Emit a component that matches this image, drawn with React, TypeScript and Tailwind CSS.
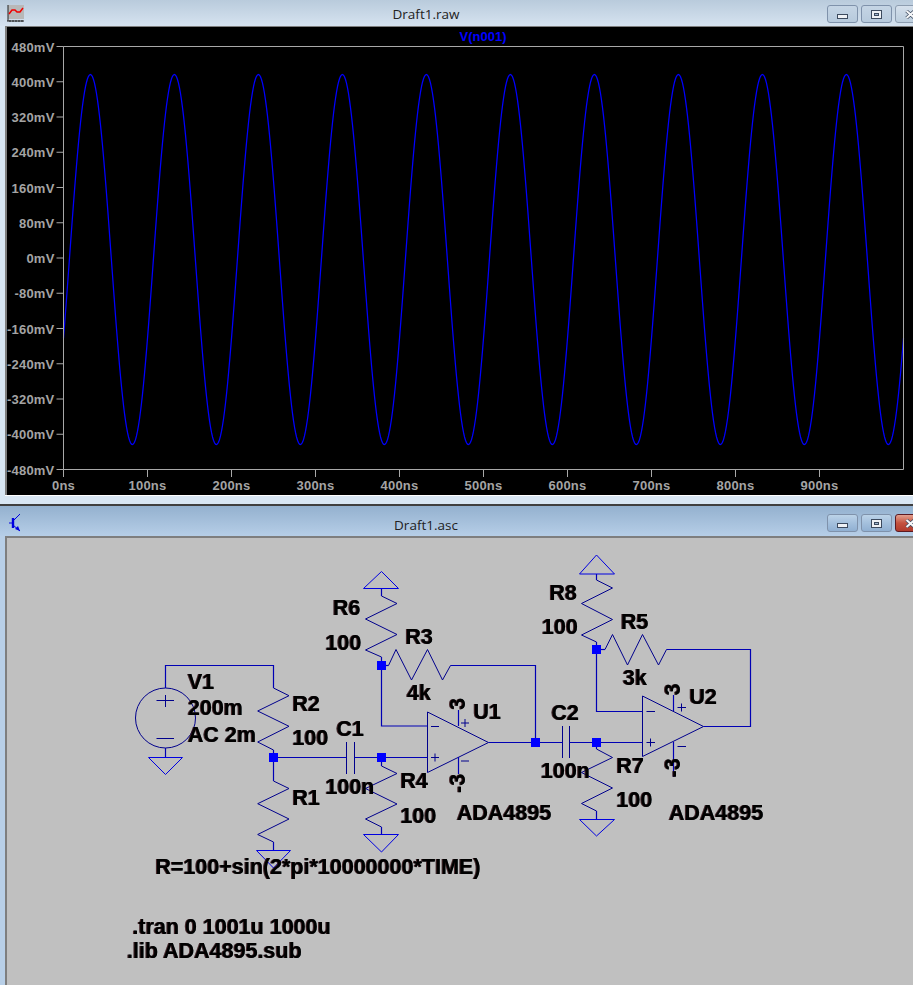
import React from 'react';

const yTicks = ['480mV', '400mV', '320mV', '240mV', '160mV', '80mV', '0mV', '-80mV', '-160mV', '-240mV', '-320mV', '-400mV', '-480mV'];
const xTicks = ['0ns', '100ns', '200ns', '300ns', '400ns', '500ns', '600ns', '700ns', '800ns', '900ns'];

// 10MHz sine across the 1us window of the plot
function wavePath() {
  const pts: string[] = [];
  for (let px = 0; px <= 840; px += 1) {
    const t = px / 0.84;
    const mv = -3.5 + 420 * Math.sin((2 * Math.PI * (t - 7)) / 100);
    pts.push(`${(63.5 + px).toFixed(1)},${(258 - mv * 0.4406).toFixed(1)}`);
  }
  return 'M' + pts.join('L');
}

const labels: [string, number, number][] = [
  ['V1', 188, 688.5],
  ['200m', 188, 715],
  ['AC 2m', 188, 741.5],
  ['R2', 292.5, 710.5],
  ['100', 292.5, 745],
  ['C1', 336.5, 736],
  ['100n', 325.5, 793.5],
  ['R1', 292.5, 804.5],
  ['R6', 333, 614.5],
  ['100', 325.5, 649.5],
  ['R3', 405.5, 644],
  ['4k', 407, 700],
  ['U1', 473.5, 718.5],
  ['R4', 400.5, 787.5],
  ['100', 400.5, 822.5],
  ['ADA4895', 457, 819.5],
  ['C2', 551.5, 720],
  ['100n', 541, 777.5],
  ['R8', 549.5, 599.5],
  ['100', 542, 633.5],
  ['R5', 621, 628.5],
  ['3k', 623, 685],
  ['U2', 689.5, 703.5],
  ['R7', 616.5, 772.5],
  ['100', 616.5, 806.5],
  ['ADA4895', 669, 820],
  ['R=100+sin(2*pi*10000000*TIME)', 155.5, 873.5],
  ['.tran 0 1001u 1000u', 132.5, 934],
  ['.lib ADA4895.sub', 127, 957.5],
];

const wires = [
  'M165.5 688V665.5H273.5V688',
  'M165.5 748V757',
  'M273.5 750V781',
  'M273.5 842V850',
  'M273.5 757.5H346.5',
  'M354.5 757.5H427.5',
  'M381.5 657V726H427.5',
  'M381.5 757.5V766',
  'M381.5 827V834',
  'M381.5 588V596',
  'M381.5 665.5H388.5',
  'M450.5 665.5H535.5V742.5',
  'M488.5 742.5H562.5',
  'M569.5 742.5H642.5',
  'M596.5 642V711.5H642.5',
  'M596.5 574V580',
  'M596.5 649.5H605',
  'M666.5 649.5H750.5V726.5H703.5',
  'M596.5 742.5V749',
  'M596.5 811V819',
  'M458.5 710V726',
  'M458.5 757V774',
  'M673.5 695V711',
  'M673.5 742V777',
];

const parts = [
  // resistors
  'M273.5 688L289 695.7L257.7 711L289 726.3L257.7 742L273.5 750',
  'M273.5 781L289 788.5L257.7 803.7L289 819L257.7 834.5L273.5 842',
  'M381.5 596L397 603.5L365.5 619L397 634.5L365.5 650L381.5 657',
  'M381.5 766L397 773.5L365.5 788.5L397 804L365.5 819L381.5 827',
  'M388.5 665.5L396 649.5L411.5 680L427.5 649.5L442.5 680L450.5 665.5',
  'M596.5 580L612.5 588L581.5 603.5L612.5 619.5L581.5 635L596.5 642',
  'M605 649.5L612.5 634.5L627.5 665L642.5 634.5L658.5 665L666.5 649.5',
  'M596.5 749L612.5 757.5L581.5 772.5L612.5 788L581.5 803.5L596.5 811',
  // capacitors
  'M346.5 742V774M354.5 742V774',
  'M562.5 726V758M569.5 726V758',
  // op amps and their +/- marks
  'M427.5 712L488.5 742.5L427.5 772.5Z',
  'M431 726.5H439M431 757.5H439M435 753.5V761.5M461 723H469M465 719V727M461 761H469',
  'M642.5 696L703.5 726.5L642.5 756.5Z',
  'M646.5 711.5H655M646.5 742.5H655M650.5 738.5V746.5M677.5 707.5H686M681.5 703.5V711.5M677.5 746.5H686',
  // source
  'M156.5 700.5H174M165.5 695V707M156.5 738.5H174',
];

const grounds = [
  'M148.5 757.5H182.5L165.5 774.5Z',
  'M256.5 850.5H290.5L273.5 868Z',
  'M363.5 834.5H398.5L381.5 852Z',
  'M363.5 588.5H398.5L381.5 571.5Z',
  'M579.5 574H614.5L596.5 555Z',
  'M579.5 819.5H614.5L596.5 836Z',
];

const nodes = [
  [273.5, 757.5],
  [381.5, 757.5],
  [381.5, 665.5],
  [535.5, 742.5],
  [596.5, 742.5],
  [596.5, 649.5],
];

function WinButton({ kind, active }: { kind: 'min' | 'max' | 'close'; active: boolean }) {
  if (kind === 'close') {
    return (
      <div className={`flex h-[18px] w-[31px] shrink-0 items-center justify-center rounded-[3px] border ${active ? 'border-[#5c1a22] bg-gradient-to-b from-[#e2a08f] via-[#c4523f] to-[#b03a2c]' : 'border-[#8d9db0] bg-gradient-to-b from-[#d5e0ec] to-[#bccede]'}`}>
        <svg width="11" height="9" viewBox="0 0 11 9">
          <path d="M1.5 1L9.5 8M9.5 1L1.5 8" stroke="#3c4a5e" strokeWidth="3.4" />
          <path d="M1.5 1L9.5 8M9.5 1L1.5 8" stroke="#f6f7f9" strokeWidth="2" />
        </svg>
      </div>
    );
  }
  return (
    <div className={`flex h-[18px] w-[31px] shrink-0 items-center justify-center rounded-[3px] border border-[#7f92ab] ${active ? 'bg-gradient-to-b from-[#bcd3e8] via-[#a4c0dd] to-[#90b0d2]' : 'bg-gradient-to-b from-[#c5d5e5] to-[#b7cadd]'}`}>
      {kind === 'min' ? (
        <div className="mt-[5px] h-[5px] w-[11px] border border-[#3c4a5e] bg-[#eef1f5]" />
      ) : (
        <div className="flex h-[9px] w-[11px] items-center justify-center border border-[#3c4a5e] bg-[#eef1f5]">
          <div className="h-[3px] w-[5px] border border-[#3c4a5e] bg-[#9fb6d0]" />
        </div>
      )}
    </div>
  );
}

function TitleBar({ title, active, icon }: { title: string; active: boolean; icon: React.ReactNode }) {
  return (
    <div className={`relative flex shrink-0 items-start pl-[7px] ${active ? 'h-[30px] bg-gradient-to-b from-[#94b1cf] to-[#b6cee7] pt-[8px]' : 'h-[26px] bg-gradient-to-b from-[#b9cbdc] to-[#d6e3f0] pt-[5px]'}`}>
      {icon}
      <div className={`absolute left-0 right-[61px] text-center text-[13.5px] leading-[16px] text-[#222] font-['Open_Sans',sans-serif] ${active ? 'top-[11px]' : 'top-[6px]'}`}>
        {title}
      </div>
      <div className="ml-auto flex w-[86px] gap-[3px] overflow-hidden">
        <WinButton kind="min" active={active} />
        <WinButton kind="max" active={active} />
        <WinButton kind="close" active={active} />
      </div>
    </div>
  );
}

function PlotIcon() {
  return (
    <svg width="17" height="17" viewBox="0 0 17 17" className="shrink-0">
      <rect x="1" y="0" width="16" height="14" fill="#b8b8b8" />
      <path d="M1 0V16M0 16H17M3 15V17M6 15V17M9 15V17M12 15V17M15 15V17" stroke="#222" strokeWidth="1" fill="none" />
      <path d="M2 9L5 5L8 5L10 7L13 7L16 3" stroke="#f00000" strokeWidth="1.5" fill="none" />
    </svg>
  );
}

function TransistorIcon() {
  return (
    <svg width="14" height="18" viewBox="0 0 14 18" className="ml-[2px] shrink-0">
      <path d="M0 9H4M11 0L4 7M4 11L11 17" stroke="#0000e0" strokeWidth="1" fill="none" />
      <path d="M4 4V14" stroke="#0000e0" strokeWidth="2.4" fill="none" />
      <path d="M11 17L6 15L9 12Z" fill="#0000e0" />
    </svg>
  );
}

export default function App() {
  return (
    <div className="flex h-[985px] w-[913px] flex-col overflow-hidden bg-[#d8e6f3]">
      {/* waveform viewer */}
      <section className="flex h-[504px] shrink-0 flex-col">
        <TitleBar title="Draft1.raw" active={false} icon={<PlotIcon />} />
        <div className="flex-1 bg-[#d8e6f3] pl-[5px]">
          <div className="border-l-2 border-t border-[#7e7e7e]">
            <svg width="906" height="468" viewBox="7 27 906 468" className="block bg-black">
              <path d={wavePath()} fill="none" stroke="#0000ff" strokeWidth="1.25" />
              <path d="M63.5 46.5H903.5V469.5H63.5Z" fill="none" stroke="#a8a8a8" strokeWidth="1" />
              <text x="483" y="40.5" textAnchor="middle" fill="#0000ff" className="text-[13px] font-bold font-['Liberation_Sans',sans-serif]">
                V(n001)
              </text>
              {yTicks.map((label, i) => {
                const y = 46.5 + i * 35.25;
                return (
                  <g key={label}>
                    <path d={`M56.5 ${y}H63.5`} stroke="#a8a8a8" strokeWidth="1" />
                    <text x="54.5" y={y + 5} textAnchor="end" fill="#a4a4a4" className="text-[13px] font-bold tracking-[0.2px] font-['Liberation_Sans',sans-serif]">
                      {label}
                    </text>
                  </g>
                );
              })}
              {xTicks.map((label, i) => {
                const x = 63.5 + i * 84;
                return (
                  <g key={label}>
                    <path d={`M${x} 469.5V477`} stroke="#a8a8a8" strokeWidth="1" />
                    <text x={x} y="489.5" textAnchor="middle" fill="#a4a4a4" className="text-[13px] font-bold tracking-[0.2px] font-['Liberation_Sans',sans-serif]">
                      {label}
                    </text>
                  </g>
                );
              })}
            </svg>
          </div>
          <div className="h-px bg-white" />
        </div>
      </section>

      <div className="h-[2px] shrink-0 bg-[#3f3f3f]" />

      {/* schematic editor */}
      <section className="flex min-h-0 flex-1 flex-col">
        <TitleBar title="Draft1.asc" active icon={<TransistorIcon />} />
        <div className="flex min-h-0 flex-1 bg-[#b8cfe7] pl-[5px]">
          <div className="border-l-2 border-t-2 border-[#7e7e7e]">
            <svg width="906" height="449" viewBox="7 538 906 449" className="block bg-[#c0c0c0]">
              <circle cx="165.5" cy="718" r="30" fill="none" stroke="#00008c" strokeWidth="1" />
              {parts.map((d) => (
                <path key={d} d={d} fill="none" stroke="#00008c" strokeWidth="1" />
              ))}
              {wires.map((d) => (
                <path key={d} d={d} fill="none" stroke="#0000b4" strokeWidth="1.2" />
              ))}
              {grounds.map((d) => (
                <path key={d} d={d} fill="none" stroke="#0000e0" strokeWidth="1" />
              ))}
              {nodes.map(([x, y]) => (
                <rect key={`${x}-${y}`} x={x - 4.5} y={y - 4.5} width="9" height="9" fill="#0000ff" />
              ))}
              <g fill="#000" className="text-[21.5px] font-bold font-['Liberation_Sans',sans-serif] [filter:drop-shadow(-0.4px_0_0_#3a0000aa)_drop-shadow(0.4px_0_0_#002a3aaa)]">
                {labels.map(([text, x, y]) => (
                  <text key={`${text}-${x}`} x={x} y={y}>{text}</text>
                ))}
                <text transform="translate(465 710) rotate(-90)">3</text>
                <text transform="translate(465 793) rotate(-90)">-3</text>
                <text transform="translate(680 695.5) rotate(-90)">3</text>
                <text transform="translate(680 777.5) rotate(-90)">-3</text>
              </g>
            </svg>
          </div>
        </div>
      </section>
    </div>
  );
}
